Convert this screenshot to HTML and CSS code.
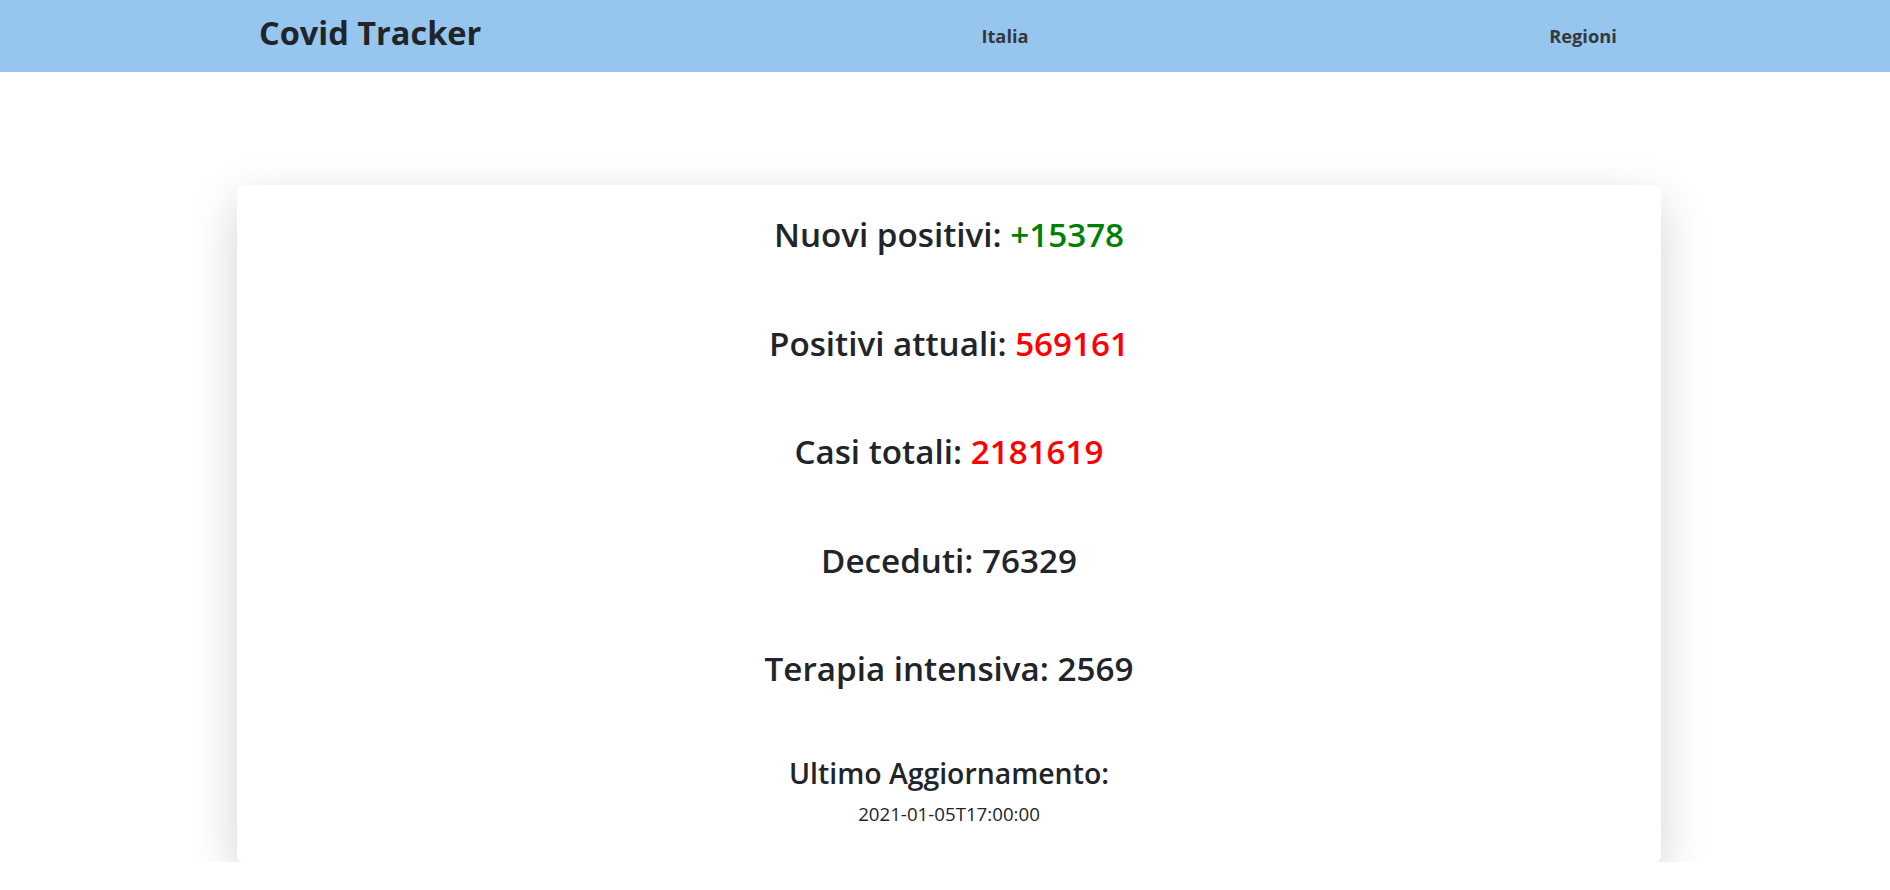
FILE: index.html
```html
<!DOCTYPE html>
<html lang="it">
<head>
<meta charset="utf-8">
<title>Covid Tracker</title>
<link rel="stylesheet" href="styles.css">
</head>
<body>
<header class="navbar">
  <div class="brand">Covid Tracker</div>
  <a class="nav-link italia" href="#">Italia</a>
  <a class="nav-link regioni" href="#">Regioni</a>
</header>
<main class="main">
  <section class="card">
    <h2 class="stat">Nuovi positivi: <span class="green">+15378</span></h2>
    <h2 class="stat">Positivi attuali: <span class="red">569161</span></h2>
    <h2 class="stat">Casi totali: <span class="red">2181619</span></h2>
    <h2 class="stat">Deceduti: 76329</h2>
    <h2 class="stat last">Terapia intensiva: 2569</h2>
    <h3 class="update-title">Ultimo Aggiornamento:</h3>
    <p class="update-date">2021-01-05T17:00:00</p>
  </section>
</main>
</body>
</html>
```

FILE: styles.css
```css
* { box-sizing: border-box; }
html, body { margin: 0; padding: 0; }
body {
  font-family: "Open Sans", "Noto Sans", sans-serif;
  color: #212529;
  background: #ffffff;
  overflow: hidden;
}
.navbar {
  height: 72px;
  background: #96c5ee;
  display: flex;
  align-items: center;
  padding-left: 259px;
}
.brand {
  width: 546px;
  font-size: 32.5px;
  font-weight: 700;
  color: #212529;
  line-height: 1;
  margin-top: -6px;
}
.nav-link {
  width: 400px;
  text-align: center;
  font-size: 18.3px;
  font-weight: 700;
  color: #35393d;
  text-decoration: none;
  margin-top: -2px;
}
.regioni { margin-left: 178px; }
.main {
  padding: 113px 0 0 237px;
}
.card {
  width: 1424px;
  background: #fff;
  border-radius: 6px;
  box-shadow: 0 16px 48px rgba(0,0,0,0.175);
  padding: 29px 0 37px;
  text-align: center;
}
.stat {
  margin: 0 0 66.5px;
  font-size: 33.2px;
  line-height: 42px;
  font-weight: 600;
  color: #212529;
}
.stat.last { margin-bottom: 65px; }
.green { color: #008000; }
.red { color: #ff0000; }
.update-title {
  margin: 0;
  font-size: 28.4px;
  line-height: 36px;
  font-weight: 600;
  color: #212529;
}
.update-date {
  margin: 11px 0 0;
  font-size: 18.7px;
  line-height: 23px;
}
```
